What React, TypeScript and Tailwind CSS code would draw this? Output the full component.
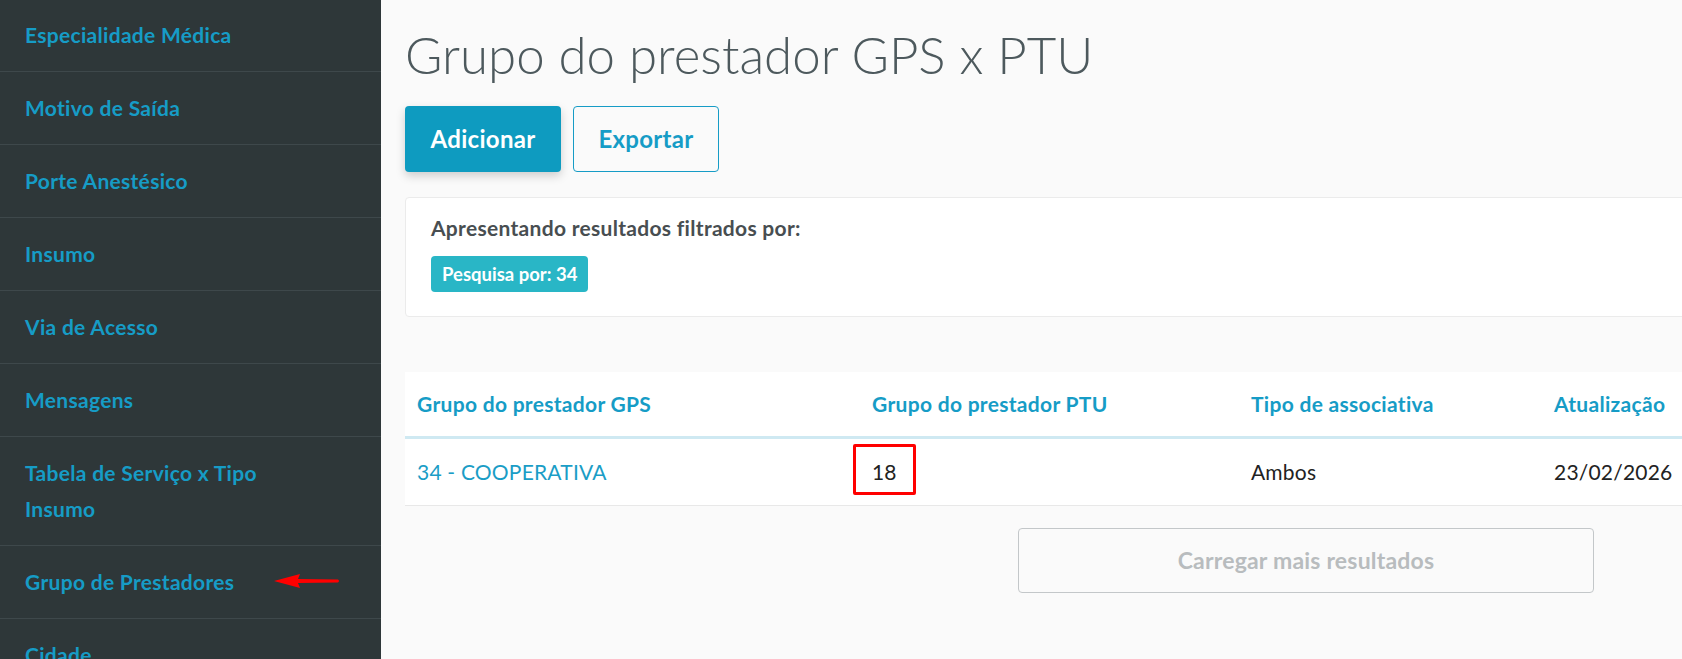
import React from 'react';

const menu = [
  'Especialidade Médica',
  'Motivo de Saída',
  'Porte Anestésico',
  'Insumo',
  'Via de Acesso',
  'Mensagens',
  'Tabela de Serviço x Tipo Insumo',
  'Grupo de Prestadores',
  'Cidade',
];

function Arrow() {
  return (
    <svg className="absolute left-[272px] top-[26px]" width="70" height="18" viewBox="0 0 70 18">
      <path d="M2 9 L28 2 L26 7 L66 7.5 Q68 9 66 10.5 L26 11 L28 16 Z" fill="#f00" />
    </svg>
  );
}

export default function App() {
  return (
    <div className="flex w-[1682px] h-[659px] overflow-hidden bg-[#fafafa]" style={{ fontFamily: 'Lato, "Noto Sans", sans-serif' }}>
      <aside className="w-[381px] shrink-0 bg-[#2e3739]">
        <ul className="-mt-px">
          {menu.map((item) => (
            <li key={item} className="relative border-b border-[#3e484b] py-[18px] pl-[25px] pr-[50px]">
              <a className="block text-[21px] leading-[36px] font-bold tracking-[0.3px] text-[#169cc6]">{item}</a>
              {item === 'Grupo de Prestadores' && <Arrow />}
            </li>
          ))}
        </ul>
      </aside>

      <main className="flex-1 pl-6 min-w-0">
        <div className="w-[1802px]">
          <h1 className="pt-[25px] text-[51px] leading-[60px] font-light text-[#4d595d]">Grupo do prestador GPS x PTU</h1>

          <div className="mt-[21px] flex gap-3">
            <button className="h-[66px] w-[156px] rounded bg-[#0e9bc0] text-[24px] font-bold tracking-[0.3px] text-white shadow-[0_4px_10px_rgba(0,0,0,0.18)]">
              Adicionar
            </button>
            <button className="h-[66px] w-[146px] rounded border border-[#169cc6] text-[24px] font-bold tracking-[0.3px] text-[#169cc6]">
              Exportar
            </button>
          </div>

          <div className="mt-[25px] h-[120px] rounded border border-[#ebebeb] bg-white px-[25px] pt-[16px]">
            <p className="text-[21px] leading-[28px] font-bold tracking-[0.3px] text-[#484e51]">Apresentando resultados filtrados por:</p>
            <span className="mt-[14px] inline-block rounded bg-[#29b6c6] px-[11px] text-[18.5px] leading-[36px] font-bold text-white">
              Pesquisa por: 34
            </span>
          </div>

          <table className="mt-[55px] w-full table-fixed bg-white text-left">
            <colgroup>
              <col className="w-[455px]" />
              <col className="w-[379px]" />
              <col className="w-[303px]" />
              <col />
            </colgroup>
            <thead>
              <tr className="border-b-[3px] border-[#cfe9f2]">
                <th className="h-[65px] px-3 text-[21px] font-bold tracking-[0.3px] text-[#169cc6]">Grupo do prestador GPS</th>
                <th className="px-3 text-[21px] font-bold tracking-[0.3px] text-[#169cc6]">Grupo do prestador PTU</th>
                <th className="px-3 text-[21px] font-bold tracking-[0.3px] text-[#169cc6]">Tipo de associativa</th>
                <th className="px-3 text-[21px] font-bold tracking-[0.3px] text-[#169cc6]">Atualização</th>
              </tr>
            </thead>
            <tbody>
              <tr className="border-b border-[#e8e8e8]">
                <td className="h-[68px] px-3 text-[21px] tracking-[0.2px] text-[#1a9dc6]">34 - COOPERATIVA</td>
                <td className="px-3 text-[21px] text-[#222]">
                  <span className="relative">
                    18
                    <span className="absolute -left-[19px] -right-[20px] -top-[15px] -bottom-[11px] rounded-[2px] border-[3px] border-[#f00]" />
                  </span>
                </td>
                <td className="px-3 text-[21px] tracking-[0.2px] text-[#222]">Ambos</td>
                <td className="px-3 text-[21px] tracking-[0.2px] text-[#222]">23/02/2026</td>
              </tr>
            </tbody>
          </table>

          <div className="mt-[22px] flex justify-center">
            <button className="h-[65px] w-[576px] rounded border border-[#c3c7c9] text-[23px] font-bold tracking-[0.2px] text-[#b8bcbe]">
              Carregar mais resultados
            </button>
          </div>
        </div>
      </main>
    </div>
  );
}
